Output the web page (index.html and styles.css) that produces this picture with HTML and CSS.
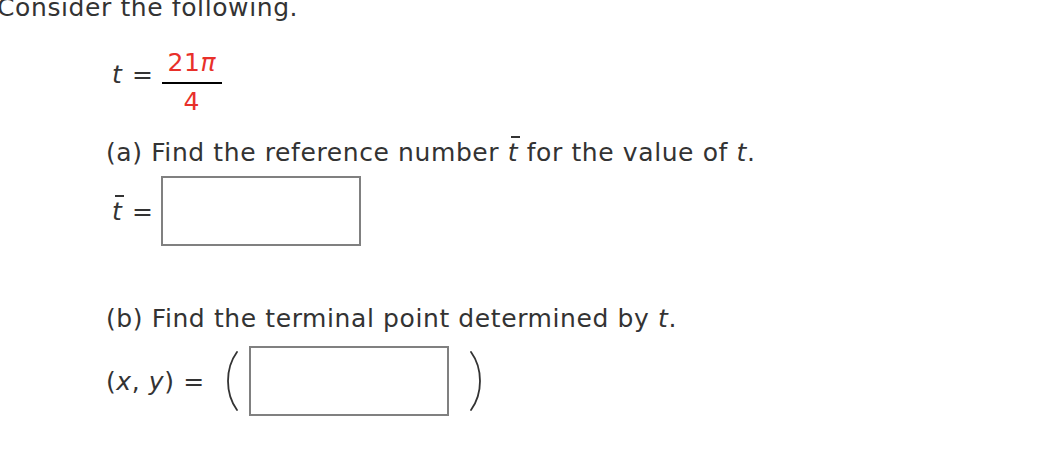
FILE: index.html
```html
<!DOCTYPE html>
<html lang="en">
<head>
<meta charset="utf-8">
<title>Consider the following</title>
<link rel="stylesheet" href="styles.css">
</head>
<body>
<div class="page">
  <p class="intro">Consider the following.</p>
  <div class="content">
    <div class="given">
      <span class="lhs"><i class="var">t</i> =</span>
      <span class="frac">
        <span class="num">21<i class="pi">π</i></span>
        <span class="den">4</span>
      </span>
    </div>

    <p class="question question-a">(a) Find the reference number <i class="var bar">t</i> for the value of <i class="var">t</i>.</p>
    <div class="answer answer-a">
      <span class="label"><i class="var bar">t</i> =</span>
      <span class="box"></span>
    </div>

    <p class="question question-b">(b) Find the terminal point determined by <i class="var">t</i>.</p>
    <div class="answer answer-b">
      <span class="label">(<i class="var">x</i>, <i class="var">y</i>) =</span>
      <svg class="paren paren-left" width="14" height="60" viewBox="0 0 14 60" aria-hidden="true">
        <path d="M12 1 C4 12 3 22 3 30 C3 38 4 48 12 59" fill="none" stroke="#333" stroke-width="1.8" stroke-linecap="round"/>
      </svg>
      <span class="box"></span>
      <svg class="paren paren-right" width="14" height="60" viewBox="0 0 14 60" aria-hidden="true">
        <path d="M2 1 C10 12 11 22 11 30 C11 38 10 48 2 59" fill="none" stroke="#333" stroke-width="1.8" stroke-linecap="round"/>
      </svg>
    </div>
  </div>
</div>
</body>
</html>
```

FILE: styles.css
```css
html, body {
  margin: 0;
  padding: 0;
  background: #ffffff;
}

.page {
  font-family: "DejaVu Sans", Verdana, sans-serif;
  font-size: 25px;
  letter-spacing: 0.6px;
  color: #333333;
  margin-left: -3px;
  margin-top: -7px;
}

.intro {
  margin: 0;
  line-height: 30px;
}

.content {
  padding-left: 109px;
}

.var {
  font-style: italic;
}

.bar {
  position: relative;
  display: inline-block;
}

.bar::before {
  content: "";
  position: absolute;
  left: 3px;
  top: -2px;
  width: 9px;
  height: 2px;
  background: #333333;
}

.given {
  display: flex;
  align-items: flex-start;
  margin-top: 21px;
}

.lhs {
  margin-top: 16px;
  line-height: 30px;
  margin-left: 6px;
}

.lhs .var {
  margin-right: 1px;
}

.frac {
  display: flex;
  flex-direction: column;
  align-items: center;
  margin-top: 5px;
  margin-left: 8px;
}

.num {
  color: #e8302a;
  line-height: 28px;
  padding: 0 6px 5px;
  border-bottom: 2px solid #000000;
}

.pi {
  font-style: italic;
}

.den {
  color: #e8302a;
  line-height: 28px;
  padding-top: 4px;
}

.question {
  margin: 0;
  line-height: 30px;
}

.question-a {
  margin-top: 22px;
}

.answer {
  display: flex;
  align-items: center;
}

.answer-a {
  margin-top: 8px;
}

.answer-a .label {
  margin-left: 6px;
  margin-right: 7px;
}

.answer-a .label .var {
  margin-right: 1px;
}

.box {
  display: block;
  width: 196px;
  height: 66px;
  border: 2px solid #808080;
  background: #ffffff;
}

.question-b {
  margin-top: 58px;
}

.answer-b {
  margin-top: 12px;
}

.answer-b .label {
  margin-right: 20px;
}

.paren-left {
  margin-right: 10px;
}

.paren-right {
  margin-left: 20px;
}
```
